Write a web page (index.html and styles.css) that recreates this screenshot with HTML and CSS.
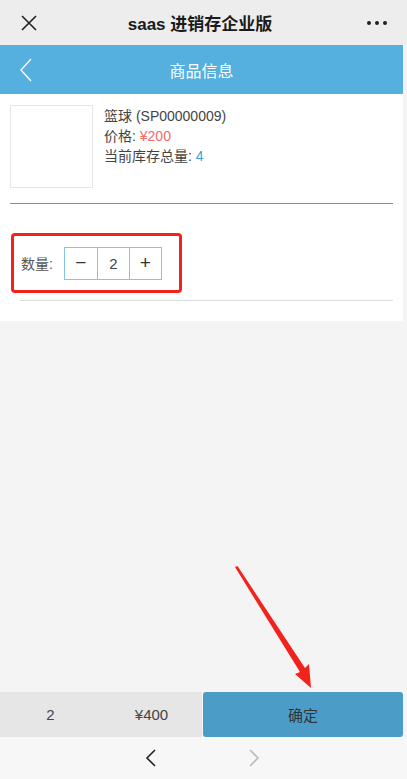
FILE: index.html
```html
<!DOCTYPE html>
<html>
<head>
  <meta charset="utf-8">
  <title>saas 进销存企业版</title>
  <link rel="stylesheet" href="styles.css">
</head>
<body>
  <div class="phone">
    <!-- wechat top bar -->
    <div class="wx-bar">
      <svg class="wx-close" width="16" height="16" viewBox="0 0 16 16">
        <path d="M1 1 L15 15 M15 1 L1 15" stroke="#222" stroke-width="1.6" fill="none"/>
      </svg>
      <div class="wx-title">saas 进销存企业版</div>
      <div class="wx-more"><span></span><span></span><span></span></div>
    </div>

    <div class="app">
      <div class="header">
        <svg class="back" width="12" height="24" viewBox="0 0 12 24">
          <path d="M11 1 L1 12 L11 23" stroke="#fff" stroke-width="1.3" fill="none"/>
        </svg>
        <div class="header-title">商品信息</div>
      </div>

      <div class="content">
        <div class="product">
          <div class="thumb"></div>
          <div class="info">
            <div>篮球 (SP00000009)</div>
            <div>价格: <span class="price">¥200</span></div>
            <div>当前库存总量: <span class="stock">4</span></div>
          </div>
        </div>
        <div class="line-blue"></div>

        <div class="qty-row">
          <label>数量:</label>
          <div class="stepper">
            <span class="sign">&minus;</span>
            <span>2</span>
            <span class="sign">+</span>
          </div>
        </div>
        <div class="line-gray"></div>
      </div>

      <div class="spacer"></div>

      <div class="footer">
        <div class="sum">2</div>
        <div class="sum">¥400</div>
        <button class="ok">确定</button>
      </div>
    </div>

    <div class="wx-nav">
      <svg width="12" height="20" viewBox="0 0 12 20">
        <path d="M10 2 L2 10 L10 18" stroke="#222" stroke-width="1.6" fill="none"/>
      </svg>
      <svg width="12" height="20" viewBox="0 0 12 20">
        <path d="M2 2 L10 10 L2 18" stroke="#bbb" stroke-width="1.6" fill="none"/>
      </svg>
    </div>

    <!-- red annotation arrow -->
    <svg class="arrow" width="407" height="779" viewBox="0 0 407 779">
      <polygon points="235,567 237.5,566 305,668 309,664 311,688 295,674 300,672" fill="#f2221c"/>
    </svg>
  </div>
</body>
</html>
```

FILE: styles.css
```css
* {
    box-sizing: border-box;
}

body {
    margin: 0;
    background-color: #f4f4f4;
    font-family: "Liberation Sans", "Noto Sans CJK SC", sans-serif;
    color: #444;
}

.phone {
    position: relative;
    width: 407px;
    height: 779px;
    display: flex;
    flex-direction: column;
}

.wx-bar {
    height: 45px;
    background-color: #ededed;
    display: flex;
    align-items: center;
    padding: 0 20px 0 21px;
}

.wx-close {
    display: block;
}

.wx-title {
    flex: 1;
    text-align: center;
    font-size: 17px;
    font-weight: bold;
    color: #1b1b1b;
    margin-right: 4px;
}

.wx-more {
    display: flex;
    gap: 4px;
}

.wx-more span {
    width: 4px;
    height: 4px;
    border-radius: 50%;
    background-color: #222;
}

.app {
    flex: 1;
    display: flex;
    flex-direction: column;
    margin-right: 4px;
}

.header {
    height: 49px;
    background-color: #55afdf;
    display: flex;
    align-items: center;
    padding-left: 20px;
}

.back {
    display: block;
}

.header-title {
    flex: 1;
    text-align: center;
    color: #fff;
    font-size: 16px;
    margin-right: 32px;
}

.content {
    background-color: #fff;
    padding: 11px 10px 20px 10px;
}

.product {
    display: flex;
}

.thumb {
    width: 83px;
    height: 83px;
    border: 1px solid #e6e6e6;
}

.info {
    margin-left: 11px;
    font-size: 14px;
    line-height: 20px;
    color: #444;
    margin-top: 1px;
}

.price {
    color: #ef6b5f;
}

.stock {
    color: #3c9fd6;
}

.line-blue {
    border-top: 1px solid #2fa6ef;
    margin: 15px 0 29px 0;
}

.qty-row {
    width: 171px;
    height: 60px;
    margin-left: 1px;
    border: 3px solid #f2221c;
    border-radius: 4px;
    display: flex;
    align-items: center;
    padding-left: 7px;
}

.qty-row label {
    font-size: 14px;
    color: #555;
    margin-right: 11px;
}

.stepper {
    display: flex;
    border: 1px solid #80c5e6;
}

.stepper span {
    width: 32px;
    height: 31px;
    display: flex;
    align-items: center;
    justify-content: center;
    font-size: 15px;
    color: #444;
}

.stepper .sign {
    font-size: 19px;
    color: #333;
}

.stepper span + span {
    border-left: 1px solid #80c5e6;
}

.line-gray {
    height: 1px;
    background-color: #dcdcdc;
    margin: 7px 0 0 10px;
}

.spacer {
    flex: 1;
}

.footer {
    height: 45px;
    display: flex;
}

.sum {
    width: 101px;
    background-color: #e6e6e6;
    display: flex;
    align-items: center;
    justify-content: center;
    font-size: 15px;
    color: #444;
}

.ok {
    flex: 1;
    margin-left: 1px;
    border: none;
    border-radius: 3px;
    background-color: #4b9dc8;
    color: #333;
    font-family: "Liberation Sans", "Noto Sans CJK SC", sans-serif;
    font-size: 15px;
}

.wx-nav {
    height: 42px;
    background-color: #f7f7f7;
    display: flex;
    align-items: center;
    justify-content: center;
    gap: 91px;
    padding-right: 3px;
}

.arrow {
    position: absolute;
    left: 0;
    top: 0;
    pointer-events: none;
}
```
